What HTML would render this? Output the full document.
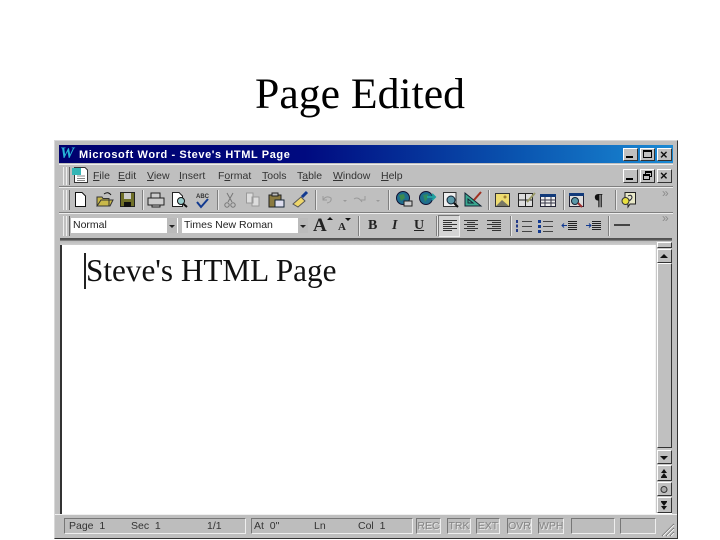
<!DOCTYPE html>
<html><head><meta charset="utf-8">
<style>
html,body{margin:0;padding:0;background:#fff}
#p{position:relative;width:720px;height:540px;overflow:hidden;background:#fff;font-family:"Liberation Sans",sans-serif}
#p div,#p span.a{position:absolute}
.t{font-size:10.5px;color:#333;white-space:nowrap;line-height:12px}
.t u{text-decoration:underline}
.sep{width:1px;background:#7f7f7f;border-right:1px solid #e8e8e8}
.grip{width:2px;border-left:1px solid #eee;border-right:1px solid #666;background:#c0c0c0}
.btn{background:#c0c0c0;border:1px solid;border-color:#fff #333 #333 #fff;box-sizing:border-box}
.st{font-size:10.5px;color:#333;white-space:nowrap;line-height:12px}
.pan{box-sizing:border-box;border:1px solid;border-color:#777 #eee #eee #777;background:#bdbdbd}
.dim{font-size:10.5px;color:#858585;text-shadow:1px 1px 0 #e6e6e6;text-align:center;line-height:15px}
svg{position:absolute;overflow:visible}
</style></head><body><div id="p">
<div style="left:0;width:720px;top:70px;text-align:center;font:43.7px/48px 'Liberation Serif',serif;color:#000;white-space:nowrap">Page Edited</div>

<!-- window -->
<div style="left:54px;top:140px;width:624px;height:399px;background:#bfbfbf;box-sizing:border-box;border:1px solid;border-color:#d8d8d8 #333 #333 #d8d8d8"></div>
<div style="left:59px;top:145px;width:614px;height:18px;background:linear-gradient(90deg,#00006e 0%,#000a80 40%,#0a55b0 75%,#1a8ad4 100%)"></div>
<div style="left:60px;top:145px;font:italic bold 16px/18px 'Liberation Serif',serif;color:#27b6d8">W</div>
<div style="left:79px;top:148px;font:bold 11px/14px 'Liberation Sans',sans-serif;color:#fff;white-space:nowrap;letter-spacing:.6px">Microsoft Word - Steve's HTML Page</div>
<!-- title buttons -->
<div class="btn" style="left:623px;top:148px;width:15px;height:13px"></div><div style="left:626px;top:156px;width:7px;height:2px;background:#000"></div>
<div class="btn" style="left:640px;top:148px;width:15px;height:13px"></div><div style="left:643px;top:150px;width:9px;height:8px;border:1px solid #000;border-top-width:2px;box-sizing:border-box"></div>
<div class="btn" style="left:657px;top:148px;width:15px;height:13px"></div><div style="left:660px;top:147px;font:bold 13px/15px 'Liberation Sans',sans-serif;color:#111">×</div>
<!-- doc buttons -->
<div class="btn" style="left:623px;top:169px;width:15px;height:14px"></div><div style="left:626px;top:178px;width:7px;height:2px;background:#000"></div>
<div class="btn" style="left:640px;top:169px;width:15px;height:14px"></div><div style="left:645px;top:171px;width:7px;height:6px;border:1px solid #000;border-top-width:2px;box-sizing:border-box"></div><div style="left:643px;top:174px;width:7px;height:6px;border:1px solid #000;border-top-width:2px;box-sizing:border-box;background:#c0c0c0"></div>
<div class="btn" style="left:657px;top:169px;width:15px;height:14px"></div><div style="left:660px;top:168px;font:bold 13px/15px 'Liberation Sans',sans-serif;color:#111">×</div>

<!-- row lines -->
<div style="left:59px;top:164px;width:614px;height:1px;background:#eee"></div>
<div style="left:59px;top:186px;width:614px;height:1px;background:#7f7f7f"></div>
<div style="left:59px;top:187px;width:614px;height:1px;background:#eee"></div>
<div style="left:59px;top:212px;width:614px;height:1px;background:#7f7f7f"></div>
<div style="left:59px;top:213px;width:614px;height:1px;background:#eee"></div>
<div class="grip" style="left:63px;top:167px;height:18px"></div><div class="grip" style="left:66px;top:167px;height:18px"></div>
<div class="grip" style="left:63px;top:190px;height:20px"></div><div class="grip" style="left:66px;top:190px;height:20px"></div>
<div class="grip" style="left:63px;top:216px;height:20px"></div><div class="grip" style="left:66px;top:216px;height:20px"></div>

<!-- menu -->
<svg style="left:71px;top:166px" width="18" height="18"><path d="M3.500 1.500H14L16.500 4V16.500H3.500Z" fill="#fff" stroke="#333"/><rect x="1" y="2" width="9" height="7" fill="#35b5b5"/><path d="M6 10H14M6 12.500H14M6 14.500H14" stroke="#888"/></svg>
<div class="t" style="left:93px;top:170px"><u>F</u>ile</div>
<div class="t" style="left:118px;top:170px"><u>E</u>dit</div>
<div class="t" style="left:147px;top:170px"><u>V</u>iew</div>
<div class="t" style="left:179px;top:170px"><u>I</u>nsert</div>
<div class="t" style="left:218px;top:170px">F<u>o</u>rmat</div>
<div class="t" style="left:262px;top:170px"><u>T</u>ools</div>
<div class="t" style="left:297px;top:170px">T<u>a</u>ble</div>
<div class="t" style="left:333px;top:170px"><u>W</u>indow</div>
<div class="t" style="left:381px;top:170px"><u>H</u>elp</div>

<!-- standard toolbar -->
<svg style="left:72px;top:190px" width="560" height="20" fill="none">
<path d="M3.500 2.500H10L13.500 6V16.500H3.500Z" fill="#fff" stroke="#111"/>
<path d="M25 16V7H30L31 8.500H37V16Z M25 16L29 10H41L38 16Z" fill="#c8b84a" stroke="#333"/><path d="M32 4Q36 1 39 5" stroke="#111"/>
<rect x="48.500" y="2.500" width="14" height="14" fill="#6f6f28" stroke="#222"/><rect x="52" y="3" width="7" height="6" fill="#ccc"/><rect x="52" y="12" width="7" height="5" fill="#111"/>
<path d="M79 8V3H88V8M76 8H92V15H76Z M80 15V17H88V15" fill="#ccc" stroke="#222"/>
<path d="M100.500 2.500H107L110.500 6V16.500H100.500Z" fill="#fff" stroke="#222"/><circle cx="109" cy="11" r="3.500" fill="#9cc" stroke="#111"/><path d="M111.500 14L115 17" stroke="#111" stroke-width="2"/>
<text x="124" y="8" font-family="Liberation Sans" font-size="6" font-weight="bold" fill="#333">ABC</text><path d="M125 12L129 17L136 9" stroke="#123a90" stroke-width="2"/>
<path d="M155 3L160 12M161 3L156 12" stroke="#777"/><circle cx="155" cy="15" r="2.200" stroke="#777"/><circle cx="161" cy="15" r="2.200" stroke="#777"/>
<path d="M174.500 3H181V13H174.500ZM180 7H187V16H180Z" fill="#ddd" stroke="#999"/>
<rect x="197" y="5" width="12" height="12" fill="#8a7a40" stroke="#222"/><rect x="200" y="3" width="6" height="3" fill="#bbb" stroke="#222"/><rect x="203" y="10" width="9" height="7" fill="#dde" stroke="#123"/>
<path d="M221 14L229 7L233 11L226 17Z" fill="#eed66a" stroke="#555"/><path d="M230 7L235 2" stroke="#123a90" stroke-width="3"/>
<path d="M251 10Q254 5 259 8Q260 12 255 13M251 6V10H255" stroke="#999"/><path d="M271 10H275L273 12Z" fill="#999"/>
<path d="M290 12Q286 6 282 9M293 6V10H289" stroke="#999"/><path d="M304 10H308L306 12Z" fill="#999"/>
<circle cx="331" cy="8" r="6.500" fill="#1f6e8e" stroke="#113"/><path d="M327 5L332 4L333 8L329 11Z" fill="#3a8a50"/><rect x="332" y="11" width="8" height="5" fill="#ccc" stroke="#222"/>
<circle cx="354" cy="8" r="6.500" fill="#1f6e8e" stroke="#113"/><path d="M351 5L356 4L356 8L353 12Z" fill="#2f8a60"/><path d="M355 7H363M360 4L363 7L360 10" stroke="#22a0a0" stroke-width="2"/>
<path d="M371.500 2.500H384V16.500H371.500Z" fill="#eee" stroke="#333"/><circle cx="379" cy="10" r="4" fill="#5a98a8" stroke="#123"/><path d="M382 13L386 17" stroke="#111" stroke-width="2"/>
<path d="M393 3V16H409Z M396 9V13H401Z" fill="#3aa890" stroke="#123"/><path d="M402 10L409 2" stroke="#a03020" stroke-width="2"/>
<rect x="423.500" y="3.500" width="14" height="13" fill="#eedc70" stroke="#333"/><path d="M424 16L430 10L437 16Z" fill="#776"/><circle cx="433" cy="7" r="1.500" fill="#a08030"/>
<rect x="446.500" y="3.500" width="14" height="13" fill="#ddd" stroke="#222"/><path d="M453.500 4V16M447 10H460" stroke="#222"/><path d="M455 12L463 3" stroke="#996" stroke-width="2"/>
<rect x="468.500" y="4.500" width="15" height="12" fill="#eee" stroke="#223"/><rect x="468" y="4" width="16" height="3" fill="#123a7a"/><path d="M468 10H484M468 13H484M473 7V16M479 7V16" stroke="#334"/>
<rect x="497.500" y="3.500" width="14" height="13" fill="#ddd" stroke="#223"/><rect x="497" y="3" width="15" height="3" fill="#123a7a"/><circle cx="503" cy="11" r="3.500" fill="#5a98a8" stroke="#123"/><path d="M506 13L510 17" stroke="#a03030" stroke-width="2"/>
</svg>
<div style="left:594px;top:190px;font:bold 17px/20px 'Liberation Serif',serif;color:#111">¶</div>
<svg style="left:620px;top:191px" width="18" height="18" fill="none"><path d="M5 1.500H15.500V13H10L8 16V13H5Z" fill="#e8e8c8" stroke="#222"/><circle cx="5.500" cy="10" r="3.500" fill="#e8e040" stroke="#333"/><path d="M8 5Q11 3 12 6Q12 8 10 9V10" stroke="#223"/></svg>
<div class="sep" style="left:142px;top:190px;height:20px"></div>
<div class="sep" style="left:217px;top:190px;height:20px"></div>
<div class="sep" style="left:315px;top:190px;height:20px"></div>
<div class="sep" style="left:388px;top:190px;height:20px"></div>
<div class="sep" style="left:488px;top:190px;height:20px"></div>
<div class="sep" style="left:563px;top:190px;height:20px"></div>
<div class="sep" style="left:615px;top:190px;height:20px"></div>
<div style="left:662px;top:187px;font:12px/12px 'Liberation Sans',sans-serif;color:#8a8a8a">»</div>
<div style="left:662px;top:212px;font:12px/12px 'Liberation Sans',sans-serif;color:#8a8a8a">»</div>

<!-- format toolbar -->
<div style="left:71px;top:218px;width:107px;height:15px;background:#fff"></div>
<div class="t" style="left:73px;top:219px;color:#222">Normal</div>
<div style="left:167px;top:218px;width:10px;height:15px;background:#bbb"></div>
<svg style="left:169px;top:225px" width="6" height="3"><path d="M0 0H6L3 3Z" fill="#222"/></svg>
<div style="left:182px;top:218px;width:126px;height:15px;background:#fff"></div>
<div class="t" style="left:184px;top:219px;color:#222">Times New Roman</div>
<div style="left:298px;top:218px;width:10px;height:15px;background:#bbb"></div>
<svg style="left:300px;top:225px" width="6" height="3"><path d="M0 0H6L3 3Z" fill="#222"/></svg>
<div style="left:313px;top:216px;font:bold 19px/20px 'Liberation Serif',serif;color:#222">A</div>
<svg style="left:327px;top:217px" width="6" height="3"><path d="M0 3H6L3 0Z" fill="#111"/></svg>
<div style="left:338px;top:221px;font:bold 11px/12px 'Liberation Serif',serif;color:#222">A</div>
<svg style="left:345px;top:218px" width="6" height="3"><path d="M0 0H6L3 3Z" fill="#111"/></svg>
<div class="sep" style="left:358px;top:216px;height:20px"></div>
<div style="left:368px;top:218px;font:bold 14px/15px 'Liberation Serif',serif;color:#222">B</div>
<div style="left:392px;top:218px;font:italic bold 14px/15px 'Liberation Serif',serif;color:#222">I</div>
<div style="left:414px;top:218px;font:bold 14px/15px 'Liberation Serif',serif;color:#222;text-decoration:underline">U</div>
<div class="sep" style="left:436px;top:216px;height:20px"></div>
<div style="left:438px;top:215px;width:22px;height:22px;box-sizing:border-box;background:#d4d4d4;border:1px solid;border-color:#777 #eee #eee #777"></div>
<svg style="left:442px;top:218px" width="220" height="16" fill="none" stroke="#333">
<path d="M1 2.500H15M1 4.500H10M1 6.500H15M1 8.500H10M1 10.500H15M1 12.500H10"/>
<path d="M22 2.500H36M25 4.500H33M22 6.500H36M25 8.500H33M22 10.500H36M25 12.500H33"/>
<path d="M45 2.500H59M50 4.500H59M45 6.500H59M50 8.500H59M45 10.500H59M50 12.500H59"/>
<path d="M75 2V5M75 6.500V9.500M75 11V14" stroke="#223a88" stroke-width="2"/><path d="M80 3.500H90M80 8.500H90M80 13.500H90" stroke="#444"/>
<rect x="96" y="2" width="3" height="3" fill="#123a90" stroke="none"/><rect x="96" y="7" width="3" height="3" fill="#123a90" stroke="none"/><rect x="96" y="12" width="3" height="3" fill="#123a90" stroke="none"/><path d="M101 3.500H111M101 8.500H111M101 13.500H111" stroke="#444"/>
<path d="M126 3.500H135M126 5.500H135M126 7.500H135M126 9.500H135M126 11.500H135" stroke="#222"/><path d="M120 7.500H125M122 5.500L120 7.500L122 9.500" stroke="#123a90"/>
<path d="M150 3.500H159M150 5.500H159M150 7.500H159M150 9.500H159M150 11.500H159" stroke="#222"/><path d="M144 7.500H149M147 5.500L149 7.500L147 9.500" stroke="#123a90"/>
</svg>
<div class="sep" style="left:510px;top:216px;height:20px"></div>
<div class="sep" style="left:608px;top:216px;height:20px"></div>
<div style="left:614px;top:224px;width:16px;height:2px;background:#444"></div>

<!-- document -->
<div style="left:60px;top:238px;width:612px;height:276px;box-sizing:border-box;background:#fff;border-left:2px solid #333"></div>
<div style="left:60px;top:238px;width:612px;height:7px;background:linear-gradient(180deg,#4d4d4d 0,#5a5a5a 30%,#bbb 45%,#cfcfcf 100%)"></div>
<div style="left:84px;top:253px;width:2px;height:36px;background:#222"></div>
<div style="left:86px;top:251px;font:31.2px/40px 'Liberation Serif',serif;color:#111;white-space:nowrap">Steve's HTML Page</div>

<!-- scrollbar -->
<div style="left:656px;top:241px;width:16px;height:272px;background:#c8c8c8"></div>
<div style="left:655px;top:245px;width:1px;height:268px;background:#f4f4f4"></div>
<div class="btn" style="left:657px;top:242px;width:15px;height:6px"></div>
<div class="btn" style="left:657px;top:249px;width:15px;height:14px"></div>
<svg style="left:660px;top:254px" width="8" height="4"><path d="M0 4H8L4 0Z" fill="#111"/></svg>
<div class="btn" style="left:657px;top:263px;width:15px;height:185px;background:#c0c0c0"></div>
<div class="btn" style="left:657px;top:450px;width:15px;height:14px"></div>
<svg style="left:660px;top:456px" width="8" height="4"><path d="M0 0H8L4 4Z" fill="#111"/></svg>
<div class="btn" style="left:657px;top:465px;width:15px;height:16px"></div>
<svg style="left:660px;top:469px" width="8" height="9"><path d="M1 4H7L4 0ZM1 8H7L4 4Z" fill="#111"/><path d="M1 8.500H7" stroke="#111"/></svg>
<div class="btn" style="left:657px;top:482px;width:15px;height:14px"></div>
<svg style="left:660px;top:485px" width="8" height="9"><circle cx="4" cy="4.500" r="3" fill="#aaa" stroke="#333"/></svg>
<div class="btn" style="left:657px;top:497px;width:15px;height:16px"></div>
<svg style="left:660px;top:501px" width="8" height="9"><path d="M1 1H7L4 5ZM1 5H7L4 9Z" fill="#111"/><path d="M1 .5H7" stroke="#111"/></svg>

<!-- status bar -->
<div style="left:55px;top:514px;width:622px;height:1px;background:#f0f0f0"></div>
<div class="pan" style="left:64px;top:518px;width:182px;height:16px"></div>
<div class="pan" style="left:251px;top:518px;width:162px;height:16px"></div>
<div class="st" style="left:69px;top:520px">Page&nbsp; 1</div>
<div class="st" style="left:131px;top:520px">Sec&nbsp; 1</div>
<div class="st" style="left:207px;top:520px">1/1</div>
<div class="st" style="left:254px;top:520px">At&nbsp; 0"</div>
<div class="st" style="left:314px;top:520px">Ln</div>
<div class="st" style="left:358px;top:520px">Col&nbsp; 1</div>
<div class="pan dim" style="left:416px;top:518px;width:25px;height:16px">REC</div>
<div class="pan dim" style="left:447px;top:518px;width:24px;height:16px">TRK</div>
<div class="pan dim" style="left:476px;top:518px;width:24px;height:16px">EXT</div>
<div class="pan dim" style="left:507px;top:518px;width:25px;height:16px">OVR</div>
<div class="pan dim" style="left:538px;top:518px;width:26px;height:16px">WPH</div>
<div class="pan" style="left:571px;top:518px;width:44px;height:16px"></div>
<div class="pan" style="left:620px;top:518px;width:36px;height:16px"></div>
<svg style="left:660px;top:522px" width="15" height="15" fill="none"><path d="M2 14L14 2M6 14L14 6M10 14L14 10" stroke="#666"/><path d="M3 14L14 3M7 14L14 7M11 14L14 11" stroke="#f4f4f4"/></svg>
</div></body></html>
